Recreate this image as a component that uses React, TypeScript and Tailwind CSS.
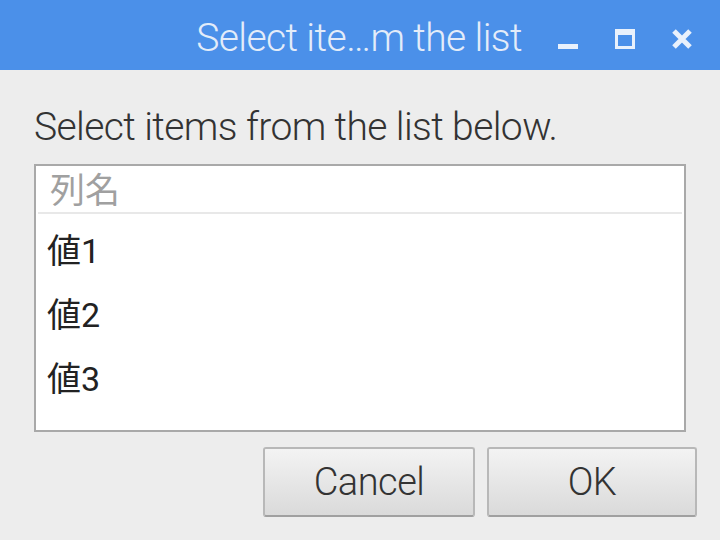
import React from "react";

const rows = ["値1", "値2", "値3"];

const WindowButtons = () => (
  <div className="flex items-center gap-[37px] pr-[28px] pl-[36px] pt-[2px]">
    {/* minimise */}
    <svg width="20" height="20" viewBox="0 0 20 20">
      <rect x="0" y="15" width="20" height="5" fill="#e9f1fc" />
    </svg>
    {/* maximise */}
    <svg width="20" height="20" viewBox="0 0 20 20">
      <rect x="1.5" y="1.5" width="17" height="17" fill="none" stroke="#e9f1fc" strokeWidth="3" />
      <rect x="1" y="1" width="18" height="5" fill="#e9f1fc" />
    </svg>
    {/* close */}
    <svg width="20" height="20" viewBox="0 0 20 20">
      <path d="M2 2 L18 18 M18 2 L2 18" stroke="#e9f1fc" strokeWidth="5" />
    </svg>
  </div>
);

export default function App() {
  return (
    <div className="flex h-[540px] w-[720px] flex-col overflow-hidden bg-[#ededed] font-['Roboto','Noto_Sans_CJK_JP',sans-serif]">
      {/* title bar */}
      <div className="flex h-[70px] shrink-0 items-center justify-end bg-[#4b90e9] pt-[6px]">
        <span className="text-[39px] font-light leading-none tracking-[-0.6px] text-[#e3ecf9]">
          Select ite…m the list
        </span>
        <WindowButtons />
      </div>

      <div className="flex flex-1 flex-col px-[34px]">
        <p className="pt-[38px] pb-[17px] text-[39px] font-light leading-none tracking-[-0.6px] text-[#333]">
          Select items from the list below.
        </p>

        {/* list */}
        <div className="h-[268px] border-2 border-[#a9a9a9] bg-white px-[2px]">
          <div className="flex h-[48px] items-center border-b-2 border-[#e8e8e8] px-[12px] pt-[4px] text-[35px] leading-none text-[#a0a0a0]">
            列名
          </div>
          <div className="flex flex-col pt-[5px]">
            {rows.map((r) => (
              <div
                key={r}
                className="flex h-[64px] items-center px-[9px] text-[34px] leading-none text-[#222]"
              >
                {r}
              </div>
            ))}
          </div>
        </div>

        {/* buttons */}
        <div className="mt-[15px] mr-[-11px] flex justify-end gap-[12px]">
          <button className="h-[70px] w-[212px] rounded-[3px] border-2 border-[#b8b8b8] border-b-[#a0a0a0] bg-gradient-to-b from-[#f3f3f3] to-[#dadada] text-[38px] font-light tracking-[-0.5px] text-[#333]">
            Cancel
          </button>
          <button className="h-[70px] w-[210px] rounded-[3px] border-2 border-[#b8b8b8] border-b-[#a0a0a0] bg-gradient-to-b from-[#f3f3f3] to-[#dadada] text-[38px] font-light tracking-[-0.5px] text-[#333]">
            OK
          </button>
        </div>
      </div>
    </div>
  );
}
